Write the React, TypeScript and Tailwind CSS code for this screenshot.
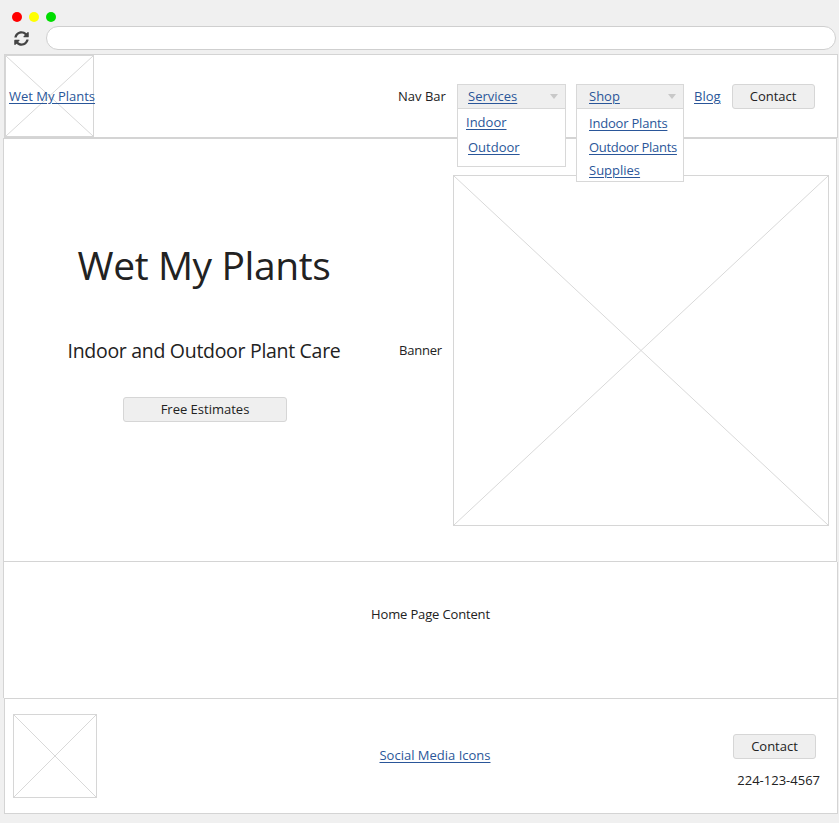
import React from "react";
import { FaSyncAlt } from "react-icons/fa";

function Placeholder({ className }: { className?: string }) {
  return (
    <div className={"border border-[#d6d6d6] bg-white " + (className ?? "")}>
      <svg className="absolute inset-0 h-full w-full" preserveAspectRatio="none" viewBox="0 0 100 100">
        <line x1="0" y1="0" x2="100" y2="100" stroke="#d9d9d9" strokeWidth="1" vectorEffect="non-scaling-stroke" />
        <line x1="100" y1="0" x2="0" y2="100" stroke="#d9d9d9" strokeWidth="1" vectorEffect="non-scaling-stroke" />
      </svg>
    </div>
  );
}

function Caret() {
  return (
    <svg width="8" height="6" viewBox="0 0 8 6">
      <path d="M0 0 L8 0 L4 5 Z" fill="#c8c8c8" />
    </svg>
  );
}

const link = "text-[#2a5699] underline underline-offset-2 decoration-1 whitespace-nowrap";

export default function App() {
  return (
    <div
      className="relative h-[823px] w-[839px] overflow-hidden bg-[#f0f0f0] text-[13px] text-[#222]"
      style={{ fontFamily: '"Open Sans", "Noto Sans", sans-serif' }}
    >
      {/* browser chrome */}
      <div className="h-[54px]">
        <div className="flex gap-[7px] pl-[12px] pt-[12px]">
          <span className="h-[10px] w-[10px] rounded-full bg-[#ff0000]" />
          <span className="h-[10px] w-[10px] rounded-full bg-[#ffff00]" />
          <span className="h-[10px] w-[10px] rounded-full bg-[#00dd00]" />
        </div>
        <div className="mt-[4px] flex items-center">
          <div className="flex w-[42px] justify-center">
            <FaSyncAlt size={15} color="#444" />
          </div>
          <div className="ml-[4px] h-[24px] w-[790px] rounded-full border border-[#cfcfcf] bg-white" />
        </div>
      </div>

      {/* header */}
      <div className="relative z-10 ml-[4px] flex h-[84px] w-[834px] items-stretch border border-[#d4d4d4] bg-white">
        <div className="relative w-[89px]">
          <Placeholder className="absolute inset-0" />
          <a className={"absolute left-[4px] top-[32px] text-[13px] " + link}>Wet My Plants</a>
        </div>
        <div className="flex flex-1 items-start pt-[29px]">
          <span className="ml-[304px] mt-[3px] w-[59px]">Nav Bar</span>
          <div className="relative">
            <div className="flex h-[25px] w-[109px] items-center justify-between border border-[#d8d8d8] bg-[#efefef] pl-[10px] pr-[7px]">
              <a className={link}>Services</a>
              <Caret />
            </div>
            <div className="absolute left-0 top-[24px] flex h-[59px] w-[109px] flex-col border border-[#d8d8d8] bg-white pl-[8px] pt-[4px]">
              <a className={link}>Indoor</a>
              <a className={"ml-[2px] mt-[5px] " + link}>Outdoor</a>
            </div>
          </div>
          <div className="relative ml-[10px]">
            <div className="flex h-[25px] w-[108px] items-center justify-between border border-[#d8d8d8] bg-[#efefef] pl-[12px] pr-[7px]">
              <a className={link}>Shop</a>
              <Caret />
            </div>
            <div className="absolute left-0 top-[24px] flex h-[74px] w-[108px] flex-col border border-[#d8d8d8] bg-white pl-[12px] pt-[5px]">
              <a className={"tracking-[-0.2px] " + link}>Indoor Plants</a>
              <a className={"mt-[4px] tracking-[-0.3px] " + link}>Outdoor Plants</a>
              <a className={"mt-[4px] " + link}>Supplies</a>
            </div>
          </div>
          <a className={"ml-[10px] mt-[3px] " + link}>Blog</a>
          <button className="ml-[11px] flex h-[25px] w-[83px] items-center justify-center rounded-[3px] border border-[#d6d6d6] bg-[#efefef]">
            Contact
          </button>
        </div>
      </div>

      {/* hero */}
      <div className="ml-[3px] flex h-[424px] w-[834px] border border-[#d4d4d4] bg-white">
        <div className="flex w-[400px] flex-col items-center">
          <h1 className="mt-[101px] text-[39px] leading-[50px] tracking-[-0.4px]">Wet My Plants</h1>
          <p className="mt-[48px] text-[19.5px] leading-[26px] tracking-[-0.3px]">Indoor and Outdoor Plant Care</p>
          <button className="ml-[2px] mt-[33px] flex h-[25px] w-[164px] items-center justify-center rounded-[3px] border border-[#d6d6d6] bg-[#efefef]">
            Free Estimates
          </button>
        </div>
        <div className="flex w-[49px] items-center">
          <span className="-ml-[5px] pt-[2px] tracking-[-0.2px]">Banner</span>
        </div>
        <div className="pt-[36px]">
          <Placeholder className="relative h-[351px] w-[376px]" />
        </div>
      </div>

      {/* content */}
      <div className="ml-[3px] flex h-[136px] w-[835px] justify-center border-l border-r border-[#d4d4d4] bg-white pt-[43px]">
        <span className="ml-[20px] tracking-[-0.15px]">Home Page Content</span>
      </div>

      {/* footer */}
      <div className="ml-[4px] flex h-[116px] w-[834px] items-center border border-[#d4d4d4] bg-white">
        <Placeholder className="relative ml-[8px] h-[84px] w-[84px]" />
        <div className="flex flex-1 justify-center pl-[40px]">
          <a className={link}>Social Media Icons</a>
        </div>
        <div className="mr-[17px] flex flex-col items-end pt-[12px]">
          <button className="mr-[4px] flex h-[25px] w-[83px] items-center justify-center rounded-[3px] border border-[#d6d6d6] bg-[#efefef]">
            Contact
          </button>
          <span className="mt-[12px]">224-123-4567</span>
        </div>
      </div>
    </div>
  );
}
